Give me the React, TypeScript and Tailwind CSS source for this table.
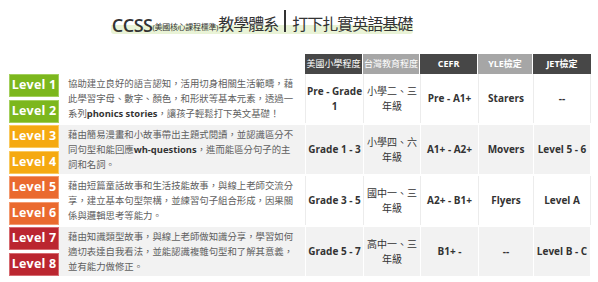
import React from "react"

const font = "font-['Open_Sans','Noto_Sans_CJK_TC',sans-serif]"

const headers = [
  { label: "美國小學程度", w: "w-[58px]", bg: "bg-[#474747]", bold: false },
  { label: "台灣教育程度", w: "w-[57px]", bg: "bg-[#a6a6a6]", bold: false },
  { label: "CEFR", w: "w-[58px]", bg: "bg-[#474747]", bold: true },
  { label: "YLE檢定", w: "w-[55px]", bg: "bg-[#a6a6a6]", bold: true },
  { label: "JET檢定", w: "w-[58px]", bg: "bg-[#474747]", bold: true },
]

const colW = ["w-[58px]", "w-[57px]", "w-[58px]", "w-[55px]", "w-[58px]"]

type Row = {
  levels: [string, string]
  color: string
  edge: string
  gray: boolean
  text: React.ReactNode
  cells: React.ReactNode[]
}

const rows: Row[] = [
  {
    levels: ["Level 1", "Level 2"],
    color: "bg-[#7cb71d]",
    edge: "border-[#a3cf5c]",
    gray: false,
    text: (
      <>
        協助建立良好的語言認知，活用切身相關生活範疇，藉此學習字母、數字、顏色，和形狀等基本元素，透過一系列
        <b className="font-bold text-[#333]">phonics stories</b>，讓孩子輕鬆打下英文基礎！
      </>
    ),
    cells: [
      <b key="a">Pre - Grade<br />1</b>,
      <span key="b">小學二、三<br />年級</span>,
      <b key="c">Pre - A1+</b>,
      <b key="d">Starers</b>,
      <b key="e">--</b>,
    ],
  },
  {
    levels: ["Level 3", "Level 4"],
    color: "bg-[#f5a911]",
    edge: "border-[#f9c95e]",
    gray: true,
    text: (
      <>
        藉由簡易漫畫和小故事帶出主題式閱讀，並認識區分不同句型和能回應
        <b className="font-bold text-[#333]">wh-questions</b>，進而能區分句子的主詞和名詞。
      </>
    ),
    cells: [
      <b key="a">Grade 1 - 3</b>,
      <span key="b">小學四、六<br />年級</span>,
      <b key="c">A1+ - A2+</b>,
      <b key="d">Movers</b>,
      <b key="e">Level 5 - 6</b>,
    ],
  },
  {
    levels: ["Level 5", "Level 6"],
    color: "bg-[#ea6a2f]",
    edge: "border-[#f39a70]",
    gray: false,
    text: <>藉由短篇童話故事和生活技能故事，與線上老師交流分享，建立基本句型架構，並練習句子組合形成，因果關係與邏輯思考等能力。</>,
    cells: [
      <b key="a">Grade 3 - 5</b>,
      <span key="b">國中一、三<br />年級</span>,
      <b key="c">A2+ - B1+</b>,
      <b key="d">Flyers</b>,
      <b key="e">Level A</b>,
    ],
  },
  {
    levels: ["Level 7", "Level 8"],
    color: "bg-[#bb2630]",
    edge: "border-[#d66a70]",
    gray: true,
    text: <>藉由知識類型故事，與線上老師做知識分享，學習如何適切表達自我看法，並能認識複雜句型和了解其意義，並有能力做修正。</>,
    cells: [
      <b key="a">Grade 5 - 7</b>,
      <span key="b">高中一、三<br />年級</span>,
      <b key="c">B1+ -</b>,
      <b key="d">--</b>,
      <b key="e">Level B - C</b>,
    ],
  },
]

export default function App() {
  return (
    <div className={`w-[598px] h-[282px] bg-white overflow-hidden ${font}`}>
      {/* Title */}
      <div className="flex justify-center pt-[6px] pr-[74px] h-[54px]">
        <h1 className="h-[28px] flex items-end text-[#333] leading-none bg-[linear-gradient(transparent_68%,#e9f3d6_68%)] rounded-[3px] px-[1px]">
          <span className="text-[18px] font-semibold tracking-[-0.5px]">CCSS</span>
          <span className="text-[8px] tracking-[-0.3px] mb-[3px]">(美國核心課程標準)</span>
          <span className="text-[16px] tracking-[-1px] mb-[2px]">教學體系</span>
          <span className="inline-block w-[2px] h-[22px] bg-[#333] mx-[6px] mb-[2px]" />
          <span className="text-[16px] tracking-[-1px] mb-[2px]">打下扎實英語基礎</span>
        </h1>
      </div>

      {/* Header row */}
      <div className="flex pl-[305px] h-[20px]">
        {headers.map((h, i) => (
          <div
            key={h.label}
            className={`${h.w} ${h.bg} ${i < 4 ? "border-r border-white" : ""} flex items-center justify-center text-white text-[9px] ${h.bold ? "font-bold" : ""}`}
          >
            {h.label}
          </div>
        ))}
      </div>

      {/* Body rows */}
      <div className="flex flex-col gap-[2px] pl-[9px]">
        {rows.map((r) => (
          <div key={r.levels[0]} className="flex h-[49px]">
            <div className="w-[50px] flex flex-col gap-[3px]">
              {r.levels.map((l) => (
                <div
                  key={l}
                  className={`flex-1 ${r.color} border ${r.edge} flex items-center justify-center text-white text-[12.5px] font-bold tracking-[0.2px]`}
                >
                  {l}
                </div>
              ))}
            </div>
            <div className={`w-[246px] flex items-center pl-[9px] ${r.gray ? "bg-[#f2f2f2]" : ""}`}>
              <p className="w-[228px] text-[9.4px] leading-[15px] text-[#606060]">{r.text}</p>
            </div>
            <div className={`flex ${r.gray ? "bg-[#f2f2f2]" : ""}`}>
              {r.cells.map((c, i) => (
                <div
                  key={i}
                  className={`${colW[i]} border-l ${i === 4 ? "border-r" : ""} ${r.gray ? "border-white" : "border-[#ececec]"} flex items-center justify-center text-center text-[10px] leading-[15px] text-[#333]`}
                >
                  {c}
                </div>
              ))}
            </div>
          </div>
        ))}
      </div>
    </div>
  )
}
